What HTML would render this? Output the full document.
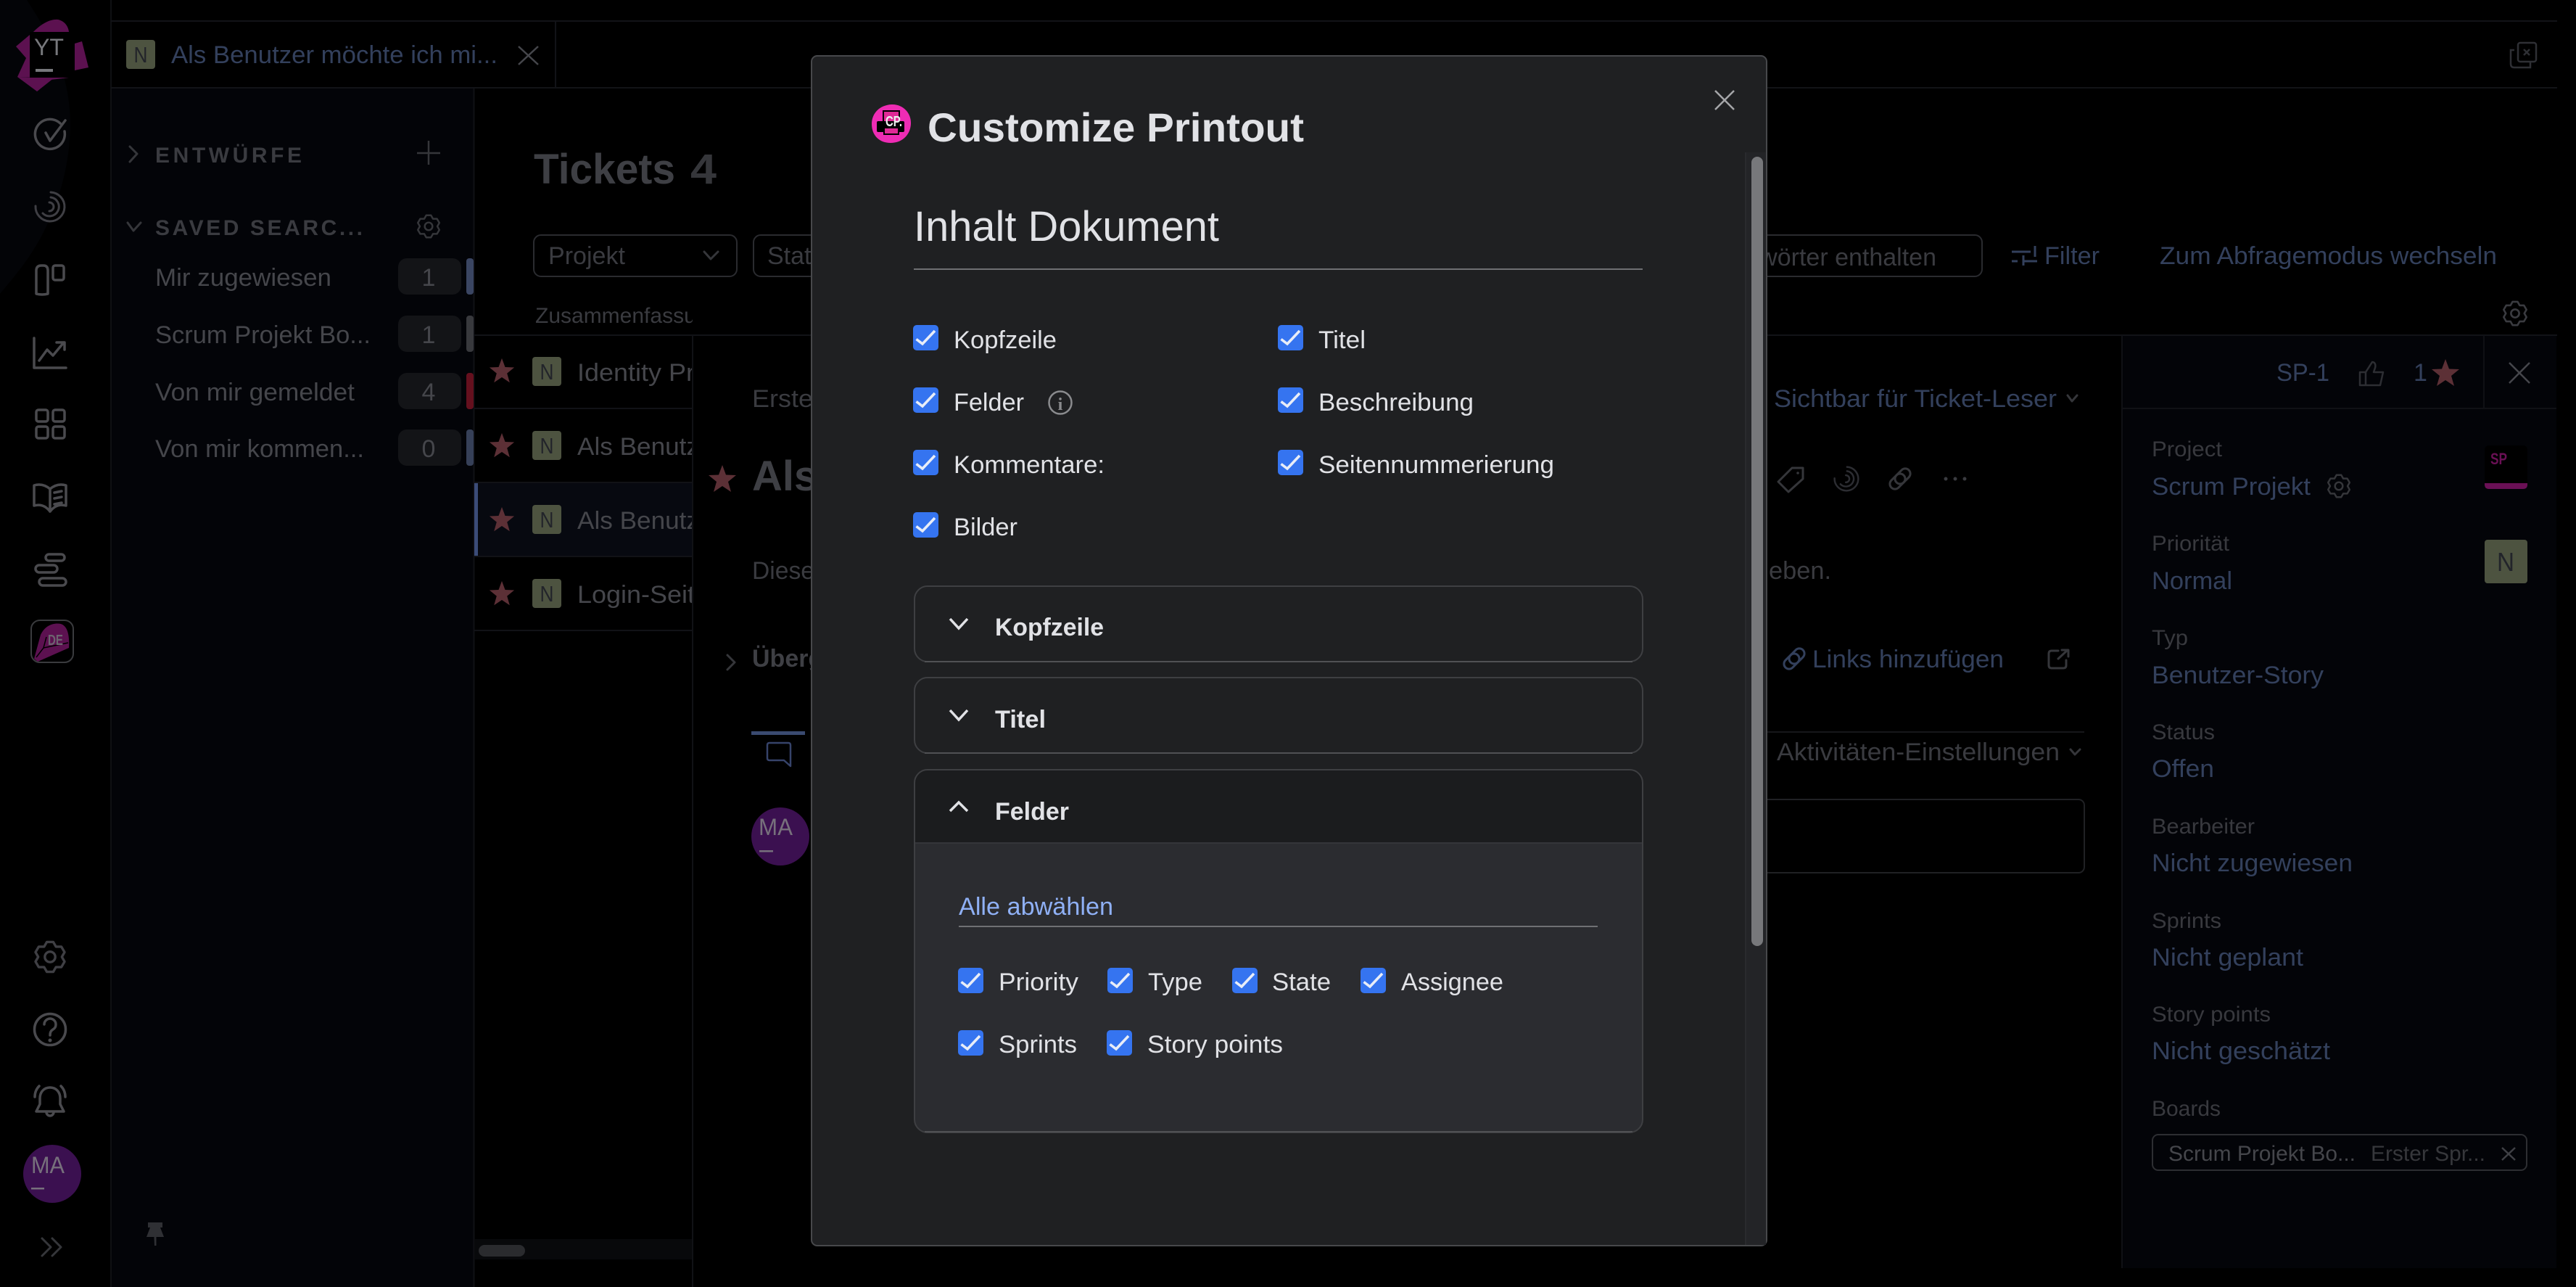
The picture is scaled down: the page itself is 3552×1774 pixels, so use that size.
<!DOCTYPE html>
<html lang="de">
<head>
<meta charset="utf-8">
<title>Customize Printout</title>
<style>
html,body{margin:0;padding:0;background:#000;width:3552px;height:1774px;overflow:hidden}
svg{display:block}
text{font-family:"Liberation Sans",sans-serif;font-size:34px}
.d{fill:#45464b}.g{fill:#3a3b40}.b{fill:#33405c}
.s{fill:none;stroke:#4a4a4e;stroke-width:3.5;stroke-linecap:round;stroke-linejoin:round}
.s2{fill:none;stroke:#35363a;stroke-width:3;stroke-linecap:round;stroke-linejoin:round}
.w{fill:#e1e2e6}
.l{fill:#38393e;font-size:30px}
</style>
</head>
<body>
<svg xmlns="http://www.w3.org/2000/svg" width="3552" height="1774" viewBox="0 0 3552 1774">
<defs>
<symbol id="cb" viewBox="0 0 35 35"><rect width="35" height="35" rx="5" fill="#3574f0"/><path d="M4.500 19.500L13 26L30 8" fill="none" stroke="#e8edf8" stroke-width="3.600"/></symbol>
<symbol id="star" viewBox="0 0 40 40"><path d="M20 1L25 14.500L39 15L28 24L32 38L20 30L8 38L12 24L1 15L15 14.500Z" fill="#5c3036"/></symbol>
<symbol id="gear" viewBox="0 0 48 48"><path d="M19.400 2.500H28.600L32.500 9.300H40.300L44.900 17.200L41 24L44.900 30.800L40.300 38.700H32.500L28.600 45.500H19.400L15.500 38.700H7.700L3.100 30.800L7 24L3.100 17.200L7.700 9.300H15.500Z" fill="none" stroke="currentColor" stroke-width="3.500" stroke-linejoin="round"/><circle cx="24" cy="24" r="7.500" fill="none" stroke="currentColor" stroke-width="3.500"/></symbol>
<symbol id="spiral" viewBox="0 0 44 44"><g fill="none" stroke="currentColor" stroke-width="3" stroke-linecap="round"><path d="M2 21A20 20 0 1 0 23 2"/><path d="M12 31A13 13 0 1 0 23 9"/><path d="M21 16A6 6 0 0 1 21 28"/></g></symbol>
<clipPath id="col"><rect x="654" y="400" width="301" height="500"/></clipPath>
</defs>

<rect width="3552" height="1774" fill="#000"/>
<!-- left rail tint -->
<path d="M0 0H37C70 50 95 100 97 167C97 230 80 280 60 320C45 350 25 375 10 393L0 405Z" fill="#030407"/>
<!-- left panel -->
<rect x="153" y="121" width="501" height="1653" fill="#030408"/>
<path d="M153 0V1774" stroke="#0f1013" stroke-width="2"/>
<path d="M653.500 121V1774" stroke="#101115" stroke-width="2"/>
<path d="M153 29H3526M153 121H3526" stroke="#121317" stroke-width="2"/>

<!-- logo -->
<path d="M51 106L24 106L36 80L22 64L47 43C58 32 70 26 80 27C89 29 94 36 95 44L95 107L70 110L51 126Z" fill="#5c1150"/>
<path d="M103 60L113 57L122 93L103 97Z" fill="#5c1150"/>
<path d="M24 106L51 126L75 107Z" fill="#5c1150"/>
<rect x="41" y="44" width="62" height="63" fill="#000"/>
<text x="47" y="76" fill="#77787c" textLength="41" lengthAdjust="spacingAndGlyphs" style="font-size:32px">YT</text>
<rect x="49" y="95" width="24" height="4" fill="#77787c"/>

<!-- rail icons -->
<path class="s" d="M83 170A20.500 20.500 0 1 0 89 181"/><path class="s" d="M63 183L69 194L90 166"/>
<use href="#spiral" x="47" y="263" width="44" height="44" color="#3f3f44"/>
<path class="s" d="M50 405V373Q50 366 57 366H60Q66 366 66 373V405Q58 407 50 405Z"/><rect class="s" x="73" y="366" width="15" height="20" rx="3"/>
<path class="s" d="M47 466V507H91"/><path class="s" d="M54 497L65 482L73 490L88 472M78 472H89V482"/>
<rect class="s" x="50" y="565" width="16" height="16" rx="3"/><rect class="s" x="73" y="565" width="16" height="16" rx="3"/><rect class="s" x="50" y="588" width="16" height="16" rx="3"/><rect class="s" x="73" y="588" width="16" height="16" rx="3"/>
<path class="s" d="M69 674C62 668 54 667 47 669V697C54 695 62 696 69 705C76 696 84 695 91 697V669C84 667 76 668 69 674ZM69 674V705M75 679L85 677M75 687L85 685M75 695L85 693"/>
<rect class="s" x="63" y="764" width="26" height="9" rx="4.500"/><rect class="s" x="49" y="779" width="30" height="10" rx="5"/><rect class="s" x="54" y="797" width="37" height="10" rx="5"/>
<rect x="43" y="855" width="58" height="58" rx="12" fill="#000" stroke="#3a3b3e" stroke-width="2"/>
<path d="M47 908L56 875C62 862 74 858 84 860C93 863 96 875 95 893L52 912Z" fill="#5c1150"/>
<path d="M50 906L60 893L94 886M60 893L64 878" fill="none" stroke="#000" stroke-width="1.500"/>
<text x="66" y="889" fill="#6d6470" font-weight="bold" textLength="21" lengthAdjust="spacingAndGlyphs" style="font-size:20px">DE</text>
<use href="#gear" x="46" y="1296" width="46" height="46" color="#3f3f44"/>
<circle class="s" cx="69" cy="1419" r="21.500"/><path class="s" d="M61 1412A8 8 0 1 1 73 1419C70 1421 69 1423 69 1427"/><circle cx="69" cy="1434" r="2.500" fill="#4a4a4e"/>
<path class="s" d="M69 1499C60 1499 55 1506 55 1514V1522L50 1532H88L83 1522V1514C83 1506 78 1499 69 1499ZM64 1533A5 5 0 0 0 74 1533M48 1512C48 1506 50 1501 54 1497M90 1512C90 1506 88 1501 84 1497"/>
<circle cx="72" cy="1618" r="40" fill="#3b1050"/>
<text x="43" y="1617" fill="#77707c" textLength="46" lengthAdjust="spacingAndGlyphs" style="font-size:32px">MA</text>
<rect x="43" y="1637" width="18" height="2.500" fill="#77707c"/>
<path class="s2" d="M58 1707L70 1719L58 1731M72 1707L84 1719L72 1731"/>
<path d="M204 1685H224V1692H221L226 1705H202L207 1692H204ZM212.500 1705H215.500V1717H213Z" fill="#2f3034"/>

<!-- tab -->
<rect x="174" y="55" width="40" height="40" rx="4" fill="#4d5340"/>
<text x="194" y="86" fill="#22242a" text-anchor="middle" textLength="19" lengthAdjust="spacingAndGlyphs" style="font-size:31px">N</text>
<text x="236" y="87" class="b" textLength="450" lengthAdjust="spacingAndGlyphs">Als Benutzer möchte ich mi...</text>
<path d="M715 64L742 89M742 64L715 89" stroke="#45464b" stroke-width="2.500" fill="none"/>
<path d="M766 29V121" stroke="#121317" stroke-width="2"/>
<g fill="none" stroke="#2e2f34" stroke-width="2.500"><rect x="3472" y="59" width="25" height="26" rx="3"/><path d="M3467 69H3462V88Q3462 93 3467 93H3489V86"/><path d="M3480 68L3488 76M3488 68L3480 76"/></g>

<!-- left panel content -->
<path class="s2" d="M179 202L189 212L179 223" stroke-width="2.500"/>
<text x="214" y="224" fill="#3a3b40" font-weight="bold" textLength="202" lengthAdjust="spacing" style="font-size:30px">ENTWÜRFE</text>
<path d="M591 194V227M575 211H607" stroke="#35363a" stroke-width="2.500"/>
<path class="s2" d="M176 307L184 318L194 307" stroke-width="2.500"/>
<text x="214" y="324" fill="#3a3b40" font-weight="bold" textLength="286" lengthAdjust="spacing" style="font-size:30px">SAVED SEARC...</text>
<use href="#gear" x="574" y="295" width="34" height="34" color="#35363a"/>
<g class="d">
<text x="214" y="394" textLength="243" lengthAdjust="spacingAndGlyphs">Mir zugewiesen</text>
<text x="214" y="473" textLength="297" lengthAdjust="spacingAndGlyphs">Scrum Projekt Bo...</text>
<text x="214" y="552" textLength="275" lengthAdjust="spacingAndGlyphs">Von mir gemeldet</text>
<text x="214" y="630" textLength="288" lengthAdjust="spacingAndGlyphs">Von mir kommen...</text>
</g>
<g fill="#131417"><rect x="549" y="356" width="87" height="50" rx="12"/><rect x="549" y="435" width="87" height="50" rx="12"/><rect x="549" y="514" width="87" height="50" rx="12"/><rect x="549" y="592" width="87" height="50" rx="12"/></g>
<g fill="#45464b" text-anchor="middle"><text x="591" y="394">1</text><text x="591" y="473">1</text><text x="591" y="552">4</text><text x="591" y="630">0</text></g>
<rect x="643" y="356" width="10" height="50" rx="4" fill="#3a4562"/><rect x="643" y="435" width="10" height="50" rx="4" fill="#38393d"/><rect x="643" y="514" width="10" height="50" rx="4" fill="#65101e"/><rect x="643" y="592" width="10" height="50" rx="4" fill="#364058"/>

<!-- tickets header -->
<text x="736" y="253" fill="#3e3f44" font-weight="bold" textLength="195" lengthAdjust="spacingAndGlyphs" style="font-size:58px">Tickets</text>
<text x="952" y="253" fill="#35363a" font-weight="bold" textLength="36" lengthAdjust="spacingAndGlyphs" style="font-size:58px">4</text>
<rect x="736" y="324" width="280" height="57" rx="10" fill="none" stroke="#2a2b2f" stroke-width="2"/>
<text x="756" y="364" class="g" textLength="106" lengthAdjust="spacingAndGlyphs">Projekt</text>
<path class="s2" d="M971 347L980 357L990 347" stroke="#3f3f44"/>
<rect x="1039" y="324" width="300" height="57" rx="10" fill="none" stroke="#2a2b2f" stroke-width="2"/>
<text x="1058" y="364" class="g">Status</text>
<g clip-path="url(#col)"><text x="738" y="445" class="g" style="font-size:30px">Zusammenfassung</text></g>
<path d="M654 462H3526" stroke="#121317" stroke-width="2"/>

<!-- rows -->
<rect x="654" y="665" width="301" height="102" fill="#070910"/><rect x="654" y="665" width="5" height="102" fill="#3b4c78"/>
<path d="M654 563H955M654 665H955M654 767H955M654 869H955" stroke="#111216" stroke-width="2"/>
<g>
<use href="#star" x="674" y="493" width="36" height="36"/><use href="#star" x="674" y="596" width="36" height="36"/><use href="#star" x="674" y="698" width="36" height="36"/><use href="#star" x="674" y="800" width="36" height="36"/>
<rect x="734" y="492" width="40" height="40" rx="4" fill="#4d5340"/><rect x="734" y="594" width="40" height="40" rx="4" fill="#4d5340"/><rect x="734" y="696" width="40" height="40" rx="4" fill="#4d5340"/><rect x="734" y="798" width="40" height="40" rx="4" fill="#4d5340"/>
<g fill="#22242a" text-anchor="middle"><text x="754" y="523" textLength="19" lengthAdjust="spacingAndGlyphs" style="font-size:31px">N</text><text x="754" y="625" textLength="19" lengthAdjust="spacingAndGlyphs" style="font-size:31px">N</text><text x="754" y="727" textLength="19" lengthAdjust="spacingAndGlyphs" style="font-size:31px">N</text><text x="754" y="829" textLength="19" lengthAdjust="spacingAndGlyphs" style="font-size:31px">N</text></g>
<g class="d"><text x="796" y="525" textLength="162" lengthAdjust="spacingAndGlyphs">Identity Pr</text><text x="796" y="627" textLength="168" lengthAdjust="spacingAndGlyphs">Als Benutz</text><text x="796" y="729" textLength="168" lengthAdjust="spacingAndGlyphs">Als Benutz</text><text x="796" y="831" textLength="162" lengthAdjust="spacingAndGlyphs">Login-Seit</text></g>
</g>
<rect x="654" y="1708" width="301" height="28" fill="#08090b"/><rect x="660" y="1716" width="64" height="16" rx="8" fill="#2a2b2e"/>

<!-- detail panel -->
<rect x="955" y="463" width="1971" height="1311" fill="#000"/>
<path d="M955 462V1774" stroke="#111216" stroke-width="2"/>
<text x="1037" y="561" class="g" textLength="84" lengthAdjust="spacingAndGlyphs">Erste</text>
<use href="#star" x="976" y="640" width="40" height="40"/>
<text x="1037" y="676" fill="#3e3f44" font-weight="bold" style="font-size:58px">Als Benutzer</text>
<text x="1037" y="798" class="g" textLength="86" lengthAdjust="spacingAndGlyphs">Diese</text>
<path class="s2" d="M1003 903L1013 913L1003 923"/>
<text x="1037" y="919" fill="#3e3f44" font-weight="bold">Übergeordnet</text>
<rect x="1036" y="1008" width="74" height="5" fill="#3a4a70"/>
<path d="M1058 1027Q1058 1024 1061 1024H1087Q1090 1024 1090 1027V1056L1081 1048H1061Q1058 1048 1058 1045Z" fill="none" stroke="#36436a" stroke-width="2.500" stroke-linejoin="round"/>
<circle cx="1076" cy="1153" r="40" fill="#3b1050"/>
<text x="1046" y="1151" fill="#77707c" textLength="47" lengthAdjust="spacingAndGlyphs" style="font-size:32px">MA</text>
<rect x="1047" y="1172" width="19" height="2.500" fill="#77707c"/>

<text x="2446" y="561" class="b" textLength="390" lengthAdjust="spacingAndGlyphs">Sichtbar für Ticket-Leser</text>
<path class="s2" d="M2851 545L2857 553L2864 545" stroke="#33405c"/>
<path class="s2" d="M2471 645H2486V660L2466 678L2452 664Z"/><circle cx="2479" cy="652" r="1.800" fill="#35363a"/>
<use href="#spiral" x="2528" y="642" width="36" height="36" color="#2c2d32"/>
<g transform="rotate(-45 2620 660)" fill="none" stroke="#35363a" stroke-width="3"><rect x="2603" y="653" width="24" height="14" rx="7"/><rect x="2613" y="653" width="24" height="14" rx="7"/></g>
<circle cx="2683" cy="660" r="2.500" fill="#3a3b40"/><circle cx="2696" cy="660" r="2.500" fill="#3a3b40"/><circle cx="2709" cy="660" r="2.500" fill="#3a3b40"/>
<text x="2439" y="798" class="g" textLength="86" lengthAdjust="spacingAndGlyphs">eben.</text>
<g transform="rotate(-45 2474 908)" fill="none" stroke="#33405c" stroke-width="3"><rect x="2457" y="901" width="24" height="14" rx="7"/><rect x="2467" y="901" width="24" height="14" rx="7"/></g>
<text x="2499" y="920" class="b" textLength="264" lengthAdjust="spacingAndGlyphs">Links hinzufügen</text>
<path class="s2" d="M2838 897H2829Q2825 897 2825 901V917Q2825 921 2829 921H2845Q2849 921 2849 917V910M2838 908L2851 896M2843 896H2852V905" stroke="#33343a"/>
<path d="M2436 1009H2874" stroke="#16171a" stroke-width="2"/>
<text x="2450" y="1048" class="g" textLength="390" lengthAdjust="spacingAndGlyphs">Aktivitäten-Einstellungen</text>
<path class="s2" d="M2855 1033L2861 1040L2868 1033" stroke="#3a3b40"/>
<rect x="2300" y="1102" width="574" height="101" rx="8" fill="none" stroke="#202124" stroke-width="2"/>
<rect x="2300" y="324" width="433" height="57" rx="10" fill="none" stroke="#2a2b2f" stroke-width="2"/>
<text x="2670" y="366" class="g" text-anchor="end">Schlüsselwörter enthalten</text>
<path d="M2774 347H2800M2806 339V354M2774 360H2782M2790 352V366M2790 360H2809" fill="none" stroke="#33405c" stroke-width="3"/>
<text x="2819" y="364" class="b" textLength="76" lengthAdjust="spacingAndGlyphs">Filter</text>
<text x="2978" y="364" class="b" textLength="465" lengthAdjust="spacingAndGlyphs">Zum Abfragemodus wechseln</text>
<use href="#gear" x="3450" y="414" width="36" height="36" color="#3a3b40"/>

<!-- right panel -->
<rect x="2926" y="463" width="599" height="1285" fill="#030408"/>
<path d="M2926 462V1748M3425 462V563M2926 563H3525" stroke="#101115" stroke-width="2"/>
<text x="3139" y="525" class="b" textLength="73" lengthAdjust="spacingAndGlyphs">SP-1</text>
<path d="M3254 513H3262V531H3254ZM3262 513L3271 499C3275 499 3276 503 3275 507L3273 513H3286L3282 531H3262" fill="none" stroke="#2d2e33" stroke-width="2.500" stroke-linejoin="round"/>
<text x="3328" y="525" class="b">1</text>
<use href="#star" x="3352" y="494" width="40" height="40"/>
<path d="M3460 500L3488 528M3488 500L3460 528" stroke="#45464b" stroke-width="2.500"/>

<g class="l">
<text x="2967" y="629" textLength="97" lengthAdjust="spacingAndGlyphs" style="font-size:30px">Project</text>
<text x="2967" y="759" textLength="107" lengthAdjust="spacingAndGlyphs" style="font-size:30px">Priorität</text>
<text x="2967" y="889" textLength="50" lengthAdjust="spacingAndGlyphs" style="font-size:30px">Typ</text>
<text x="2967" y="1019" textLength="87" lengthAdjust="spacingAndGlyphs" style="font-size:30px">Status</text>
<text x="2967" y="1149" textLength="142" lengthAdjust="spacingAndGlyphs" style="font-size:30px">Bearbeiter</text>
<text x="2967" y="1279" textLength="96" lengthAdjust="spacingAndGlyphs" style="font-size:30px">Sprints</text>
<text x="2967" y="1408" textLength="164" lengthAdjust="spacingAndGlyphs" style="font-size:30px">Story points</text>
<text x="2967" y="1538" textLength="95" lengthAdjust="spacingAndGlyphs" style="font-size:30px">Boards</text>
</g>
<g class="b">
<text x="2967" y="682" textLength="219" lengthAdjust="spacingAndGlyphs">Scrum Projekt</text>
<text x="2967" y="812" textLength="111" lengthAdjust="spacingAndGlyphs">Normal</text>
<text x="2967" y="942" textLength="237" lengthAdjust="spacingAndGlyphs">Benutzer-Story</text>
<text x="2967" y="1071" textLength="86" lengthAdjust="spacingAndGlyphs">Offen</text>
<text x="2967" y="1201" textLength="277" lengthAdjust="spacingAndGlyphs">Nicht zugewiesen</text>
<text x="2967" y="1331" textLength="209" lengthAdjust="spacingAndGlyphs">Nicht geplant</text>
<text x="2967" y="1460" textLength="246" lengthAdjust="spacingAndGlyphs">Nicht geschätzt</text>
</g>
<use href="#gear" x="3208" y="653" width="34" height="34" color="#35363a"/>
<rect x="3426" y="614" width="59" height="60" rx="6" fill="#000"/><path d="M3426 666H3485V668Q3485 674 3479 674H3432Q3426 674 3426 668Z" fill="#6a1055"/>
<text x="3434" y="640" fill="#6a1055" font-weight="bold" textLength="23" lengthAdjust="spacingAndGlyphs" style="font-size:22px">SP</text>
<rect x="3426" y="744" width="59" height="60" rx="4" fill="#4d5340"/>
<text x="3455" y="787" fill="#22242a" text-anchor="middle" textLength="24" lengthAdjust="spacingAndGlyphs" style="font-size:36px">N</text>
<rect x="2968" y="1564" width="516" height="49" rx="8" fill="none" stroke="#2d2e32" stroke-width="2"/>
<text x="2990" y="1600" class="d" textLength="258" lengthAdjust="spacingAndGlyphs" style="font-size:30px">Scrum Projekt Bo...</text>
<text x="3269" y="1600" fill="#36373b" textLength="158" lengthAdjust="spacingAndGlyphs" style="font-size:30px">Erster Spr...</text>
<path d="M3450 1582L3468 1599M3468 1582L3450 1599" stroke="#3f4045" stroke-width="2.500"/>

<!-- dialog -->
<rect x="1119" y="77" width="1317" height="1640" rx="8" fill="#1f2022" stroke="#47484b" stroke-width="2"/>
<rect x="2407" y="210" width="28" height="1506" fill="#232427"/>
<path d="M2407 210V1716" stroke="#2a2b2e" stroke-width="2"/>
<rect x="2415" y="216" width="16" height="1088" rx="8" fill="#77787b"/>

<path d="M1229 144C1245 143 1257 156 1256 171C1255 187 1243 197 1228 197C1213 197 1202 187 1202 171C1202 156 1213 145 1229 144Z" fill="#ee2cb4"/>
<rect x="1218" y="153" width="22" height="18" fill="#e02a96" stroke="#000" stroke-width="2"/>
<rect x="1209" y="167" width="38" height="15" rx="2" fill="#000"/>
<rect x="1219" y="176" width="20" height="9" fill="#e02a96" stroke="#000" stroke-width="2"/>
<text x="1221" y="174" fill="#eee" font-weight="bold" textLength="23" lengthAdjust="spacingAndGlyphs" style="font-size:20px">CP.</text>
<text x="1279" y="195" class="w" font-weight="bold" textLength="519" lengthAdjust="spacingAndGlyphs" style="font-size:56px">Customize Printout</text>
<path d="M2365 125L2391 151M2391 125L2365 151" stroke="#a5a6a9" stroke-width="2.500"/>

<text x="1260" y="332" class="w" textLength="421" lengthAdjust="spacingAndGlyphs" style="font-size:58px">Inhalt Dokument</text>
<path d="M1260 371H2265" stroke="#6f7073" stroke-width="2"/>

<use href="#cb" x="1259" y="448" width="35" height="35"/><use href="#cb" x="1259" y="534" width="35" height="35"/><use href="#cb" x="1259" y="620" width="35" height="35"/><use href="#cb" x="1259" y="706" width="35" height="35"/>
<use href="#cb" x="1762" y="448" width="35" height="35"/><use href="#cb" x="1762" y="534" width="35" height="35"/><use href="#cb" x="1762" y="620" width="35" height="35"/>
<g class="w">
<text x="1315" y="480" textLength="142" lengthAdjust="spacingAndGlyphs">Kopfzeile</text>
<text x="1315" y="566" textLength="97" lengthAdjust="spacingAndGlyphs">Felder</text>
<text x="1315" y="652" textLength="208" lengthAdjust="spacingAndGlyphs">Kommentare:</text>
<text x="1315" y="738" textLength="88" lengthAdjust="spacingAndGlyphs">Bilder</text>
<text x="1818" y="480" textLength="65" lengthAdjust="spacingAndGlyphs">Titel</text>
<text x="1818" y="566" textLength="214" lengthAdjust="spacingAndGlyphs">Beschreibung</text>
<text x="1818" y="652" textLength="325" lengthAdjust="spacingAndGlyphs">Seitennummerierung</text>
</g>
<circle cx="1462" cy="555" r="15.500" fill="none" stroke="#8a8b8e" stroke-width="2.500"/>
<text x="1462" y="565" fill="#8a8b8e" text-anchor="middle" font-weight="bold" style="font-size:24px;font-family:'Liberation Serif',serif">i</text>

<!-- accordions -->
<rect x="1261" y="808" width="1004" height="104" rx="18" fill="#1f2022" stroke="#3e3f42" stroke-width="2"/>
<path d="M1275 912H2251" stroke="#505154" stroke-width="2"/>
<path d="M1310 853L1322 866L1334 853" fill="none" stroke="#e1e2e6" stroke-width="3.500"/>
<text x="1372" y="876" class="w" font-weight="bold" textLength="150" lengthAdjust="spacingAndGlyphs">Kopfzeile</text>

<rect x="1261" y="934" width="1004" height="104" rx="18" fill="#1f2022" stroke="#3e3f42" stroke-width="2"/>
<path d="M1275 1038H2251" stroke="#505154" stroke-width="2"/>
<path d="M1310 979L1322 992L1334 979" fill="none" stroke="#e1e2e6" stroke-width="3.500"/>
<text x="1372" y="1003" class="w" font-weight="bold" textLength="70" lengthAdjust="spacingAndGlyphs">Titel</text>

<rect x="1261" y="1061" width="1004" height="500" rx="18" fill="#2b2c30"/>
<path d="M1261 1162V1079Q1261 1061 1279 1061H2247Q2265 1061 2265 1079V1162Z" fill="#1b1c1e"/>
<rect x="1261" y="1061" width="1004" height="500" rx="18" fill="none" stroke="#3e3f42" stroke-width="2"/>
<path d="M1262 1162H2264" stroke="#35363a" stroke-width="2"/>
<path d="M1275 1560H2251" stroke="#505154" stroke-width="2"/>
<path d="M1310 1118L1322 1106L1334 1118" fill="none" stroke="#e1e2e6" stroke-width="3.500"/>
<text x="1372" y="1130" class="w" font-weight="bold" textLength="102" lengthAdjust="spacingAndGlyphs">Felder</text>

<text x="1322" y="1261" fill="#8fb0f5" textLength="213" lengthAdjust="spacingAndGlyphs">Alle abwählen</text>
<path d="M1322 1277H2203" stroke="#6f7073" stroke-width="2"/>
<use href="#cb" x="1321" y="1334" width="35" height="35"/><use href="#cb" x="1527" y="1334" width="35" height="35"/><use href="#cb" x="1699" y="1334" width="35" height="35"/><use href="#cb" x="1876" y="1334" width="35" height="35"/>
<use href="#cb" x="1321" y="1420" width="35" height="35"/><use href="#cb" x="1526" y="1420" width="35" height="35"/>
<g class="w">
<text x="1377" y="1365" textLength="110" lengthAdjust="spacingAndGlyphs">Priority</text>
<text x="1583" y="1365" textLength="75" lengthAdjust="spacingAndGlyphs">Type</text>
<text x="1754" y="1365" textLength="81" lengthAdjust="spacingAndGlyphs">State</text>
<text x="1932" y="1365" textLength="141" lengthAdjust="spacingAndGlyphs">Assignee</text>
<text x="1377" y="1451" textLength="108" lengthAdjust="spacingAndGlyphs">Sprints</text>
<text x="1582" y="1451" textLength="187" lengthAdjust="spacingAndGlyphs">Story points</text>
</g>
</svg>
</body>
</html>
